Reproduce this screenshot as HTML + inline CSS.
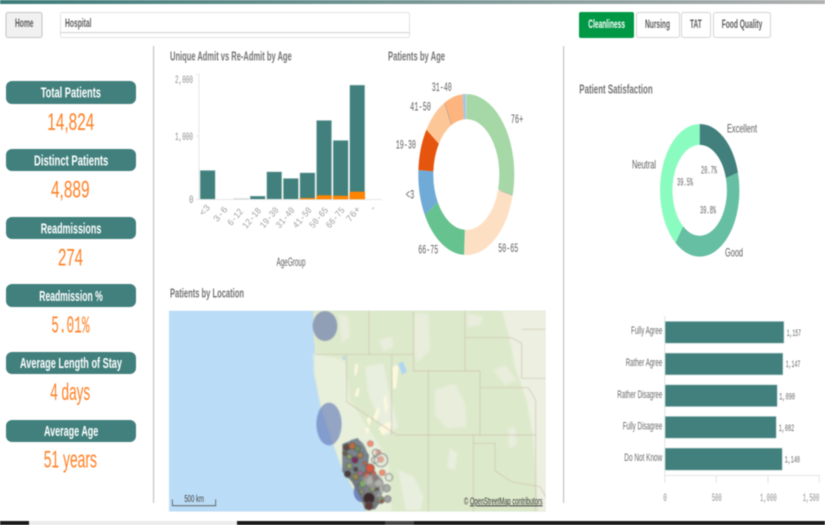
<!DOCTYPE html>
<html><head><meta charset="utf-8"><title>Hospital</title>
<style>
html,body{margin:0;padding:0;background:#fff;width:825px;height:525px;overflow:hidden}
svg{display:block;filter:blur(.4px)}
text{font-family:"Liberation Sans",sans-serif}
.t{font-weight:bold;font-size:13px;fill:#757575}
.k{font-weight:bold;font-size:15px;fill:#fff}
.v{font-size:24px;fill:#ff8125}
.m{font-family:"Liberation Mono",monospace;font-size:11px;fill:#8c8c8c}
.r{font-family:"Liberation Mono",monospace;font-size:9.5px;fill:#a0a0a0}
.d{font-family:"Liberation Mono",monospace;font-size:12.5px;fill:#5e5e5e}
.s{font-size:12px;fill:#5e5e5e}
.l{font-size:11px;fill:#6a6a6a}
.n{font-family:"Liberation Mono",monospace;font-size:10px;fill:#666}
.b{font-weight:bold;font-size:12px;fill:#5c5c5c}
</style></head><body>
<svg width="825" height="525" viewBox="0 0 825 525" xmlns="http://www.w3.org/2000/svg">
<defs>
<linearGradient id="g"><stop offset="0" stop-color="#3c7d7a"/><stop offset="1" stop-color="#b0b0b0"/></linearGradient>
<clipPath id="mc"><rect x="12" y="32" width="1130" height="603"/></clipPath>
<filter id="bl" x="-5%" y="-5%" width="110%" height="110%"><feGaussianBlur stdDeviation="3"/></filter>
<filter id="bs" x="-5%" y="-5%" width="110%" height="110%"><feGaussianBlur stdDeviation="1.3"/></filter>
</defs>
<rect width="825" height="525" fill="#fff"/>
<rect width="825" height="4" fill="url(#g)"/>

<!-- top controls -->
<rect x="6" y="12.5" width="36" height="25" rx="2" fill="#f1f1f1" stroke="#c4c4c4"/>
<text class="b" x="15" y="27" textLength="18.5" lengthAdjust="spacingAndGlyphs">Home</text>
<rect x="60.5" y="12.5" width="349" height="25" rx="2" fill="#fff" stroke="#e2e2e2"/>
<rect x="60" y="32" width="350" height="1.2" fill="#d6d6d6"/>
<text class="b" x="65" y="27" textLength="26.5" lengthAdjust="spacingAndGlyphs">Hospital</text>

<rect x="579" y="12" width="55" height="26" rx="2" fill="#009845"/>
<text class="b" x="588.3" y="28" textLength="36.7" lengthAdjust="spacingAndGlyphs" style="fill:#fff">Cleanliness</text>
<rect x="636.5" y="12.5" width="43" height="25" rx="2" fill="#fff" stroke="#d4d4d4"/>
<text class="b" x="645" y="28" textLength="25" lengthAdjust="spacingAndGlyphs">Nursing</text>
<rect x="681.5" y="12.5" width="29" height="25" rx="2" fill="#fff" stroke="#d4d4d4"/>
<text class="b" x="690" y="28" textLength="11.7" lengthAdjust="spacingAndGlyphs">TAT</text>
<rect x="713.5" y="12.5" width="57" height="25" rx="2" fill="#fff" stroke="#d4d4d4"/>
<text class="b" x="721.7" y="28" textLength="40.6" lengthAdjust="spacingAndGlyphs">Food Quality</text>

<!-- dividers -->
<rect x="153" y="46" width="1.2" height="457" fill="#c4c4c4"/>
<rect x="563" y="46" width="1.2" height="457" fill="#c4c4c4"/>

<!-- KPIs -->
<g fill="#41807d">
<rect x="6" y="81" width="130" height="23" rx="6"/>
<rect x="6" y="149" width="130" height="22" rx="6"/>
<rect x="6" y="217" width="130" height="22" rx="6"/>
<rect x="6" y="284" width="130" height="23" rx="6"/>
<rect x="6" y="352" width="130" height="22" rx="6"/>
<rect x="6" y="420" width="130" height="22" rx="6"/>
</g>
<text class="k" x="40.7" y="97.5" textLength="60.3" lengthAdjust="spacingAndGlyphs">Total Patients</text>
<text class="k" x="34" y="165.5" textLength="74.3" lengthAdjust="spacingAndGlyphs">Distinct Patients</text>
<text class="k" x="40.7" y="233.5" textLength="60.6" lengthAdjust="spacingAndGlyphs">Readmissions</text>
<text class="k" x="39.3" y="301" textLength="63.4" lengthAdjust="spacingAndGlyphs">Readmission %</text>
<text class="k" x="20" y="368" textLength="102" lengthAdjust="spacingAndGlyphs">Average Length of Stay</text>
<text class="k" x="44" y="436" textLength="54.3" lengthAdjust="spacingAndGlyphs">Average Age</text>

<text class="v" x="47.3" y="130" textLength="47" lengthAdjust="spacingAndGlyphs">14,824</text>
<text class="v" x="51" y="197.5" textLength="38.5" lengthAdjust="spacingAndGlyphs">4,889</text>
<text class="v" x="58" y="265.5" textLength="25" lengthAdjust="spacingAndGlyphs">274</text>
<text class="v" x="51.2" y="332.5" textLength="38.3" lengthAdjust="spacingAndGlyphs" style="font-family:'Liberation Mono',monospace">5.01%</text>
<text class="v" x="50.2" y="400" textLength="40" lengthAdjust="spacingAndGlyphs">4 days</text>
<text class="v" x="43.7" y="467.5" textLength="53.3" lengthAdjust="spacingAndGlyphs">51 years</text>

<!-- titles -->
<text class="t" x="170" y="60.5" textLength="121.7" lengthAdjust="spacingAndGlyphs">Unique Admit vs Re-Admit by Age</text>
<text class="t" x="388" y="60.5" textLength="57" lengthAdjust="spacingAndGlyphs">Patients by Age</text>
<text class="t" x="579.3" y="93.5" textLength="73.4" lengthAdjust="spacingAndGlyphs">Patient Satisfaction</text>
<text class="t" x="170" y="297.5" textLength="74" lengthAdjust="spacingAndGlyphs">Patients by Location</text>

<!-- bar chart -->
<g stroke="#e6e6e6" stroke-width="1"><path d="M199 74V199.5M196 74.5h3M196 136h3M196 199.5H382" fill="none"/></g>
<text class="m" x="175" y="83" textLength="18" lengthAdjust="spacingAndGlyphs">2,000</text>
<text class="m" x="175" y="140" textLength="18" lengthAdjust="spacingAndGlyphs">1,000</text>
<text class="m" x="189" y="203" textLength="4.5" lengthAdjust="spacingAndGlyphs">0</text>
<g fill="#41807d" stroke="#d4e4e2" stroke-width=".6">
<rect x="200" y="170.3" width="15.3" height="29"/>
<rect x="233.3" y="198.2" width="15.3" height="1.1" fill="#cfdcda" stroke="none"/>
<rect x="250" y="196" width="15.3" height="3.3"/>
<rect x="266.6" y="171.7" width="15.3" height="27.6"/>
<rect x="283.2" y="178.3" width="15.3" height="21"/>
<rect x="299.8" y="172.7" width="15.3" height="26.6"/>
<rect x="316.4" y="120.3" width="15.3" height="79"/>
<rect x="333" y="140.3" width="15.3" height="59"/>
<rect x="349.6" y="85" width="15.3" height="114.3"/>
</g>
<g fill="#ff8400">
<rect x="299.8" y="198" width="15.3" height="1.3"/>
<rect x="316.4" y="195.3" width="15.3" height="4"/>
<rect x="333" y="195.7" width="15.3" height="3.6"/>
<rect x="349.6" y="191.7" width="15.3" height="7.6"/>
</g>
<g text-anchor="middle">
<text class="r" transform="translate(207,212) rotate(-50)" text-anchor="middle">&lt;3</text>
<text class="r" transform="translate(222.7,216) rotate(-50)" text-anchor="middle">3-6</text>
<text class="r" transform="translate(237.5,219) rotate(-50)" textLength="19" lengthAdjust="spacingAndGlyphs" text-anchor="middle">6-12</text>
<text class="r" transform="translate(254,220) rotate(-50)" textLength="24" lengthAdjust="spacingAndGlyphs" text-anchor="middle">12-18</text>
<text class="r" transform="translate(271.5,219.5) rotate(-50)" textLength="24" lengthAdjust="spacingAndGlyphs" text-anchor="middle">19-30</text>
<text class="r" transform="translate(287.5,219.5) rotate(-50)" textLength="24" lengthAdjust="spacingAndGlyphs" text-anchor="middle">31-40</text>
<text class="r" transform="translate(304.5,219.5) rotate(-50)" textLength="24" lengthAdjust="spacingAndGlyphs" text-anchor="middle">41-50</text>
<text class="r" transform="translate(321,219.5) rotate(-50)" textLength="24" lengthAdjust="spacingAndGlyphs" text-anchor="middle">50-65</text>
<text class="r" transform="translate(337.5,219.5) rotate(-50)" textLength="24" lengthAdjust="spacingAndGlyphs" text-anchor="middle">66-75</text>
<text class="r" transform="translate(355.5,216) rotate(-50)" text-anchor="middle">76+</text>
<text class="r" transform="translate(375,210) rotate(-50)" text-anchor="middle">-</text>
</g>
<text class="s" x="276.5" y="266" textLength="29" lengthAdjust="spacingAndGlyphs">AgeGroup</text>

<!-- age donut -->
<g transform="translate(466.3,174.5) scale(1,1.677) rotate(-90)" fill="none" stroke-width="15">
<circle r="40.5" pathLength="100" stroke="#a5d8a6" stroke-dasharray="29.3 100" stroke-dashoffset="0"/>
<circle r="40.5" pathLength="100" stroke="#fde0c4" stroke-dasharray="21.5 100" stroke-dashoffset="-29.3"/>
<circle r="40.5" pathLength="100" stroke="#66c28e" stroke-dasharray="15.9 100" stroke-dashoffset="-50.8"/>
<circle r="40.5" pathLength="100" stroke="#6fabd6" stroke-dasharray="9.3 100" stroke-dashoffset="-66.7"/>
<circle r="40.5" pathLength="100" stroke="#e6550d" stroke-dasharray="8.5 100" stroke-dashoffset="-76"/>
<circle r="40.5" pathLength="100" stroke="#fdc696" stroke-dasharray="7.9 100" stroke-dashoffset="-84.5"/>
<circle r="40.5" pathLength="100" stroke="#fdb47e" stroke-dasharray="6.5 100" stroke-dashoffset="-92.4"/>
<circle r="40.5" pathLength="100" stroke="#a9c4de" stroke-dasharray="1.1 100" stroke-dashoffset="-98.9"/>
</g>
<path d="M499.5 190.5L512 195M445 103L451 124" stroke="#a0a0a0" stroke-width=".5" fill="none"/>
<text class="d" x="431.7" y="91" textLength="20" lengthAdjust="spacingAndGlyphs">31-40</text>
<text class="d" x="410" y="110.5" textLength="21" lengthAdjust="spacingAndGlyphs">41-50</text>
<text class="d" x="510.7" y="123" textLength="12.6" lengthAdjust="spacingAndGlyphs">76+</text>
<text class="d" x="395.7" y="148.5" textLength="20.3" lengthAdjust="spacingAndGlyphs">19-30</text>
<text class="d" x="405.7" y="198.5" textLength="8.6" lengthAdjust="spacingAndGlyphs">&lt;3</text>
<text class="d" x="418.3" y="253.5" textLength="20" lengthAdjust="spacingAndGlyphs">66-75</text>
<text class="d" x="498.3" y="252" textLength="20" lengthAdjust="spacingAndGlyphs">50-65</text>

<!-- satisfaction donut -->
<g transform="translate(699.7,190.3) scale(1,1.67) rotate(-90)" fill="none" stroke-width="12.5">
<circle r="33.45" pathLength="100" stroke="#41807d" stroke-dasharray="20.7 100" stroke-dashoffset="0"/>
<circle r="33.45" pathLength="100" stroke="#66bfa2" stroke-dasharray="39.8 100" stroke-dashoffset="-20.7"/>
<circle r="33.45" pathLength="100" stroke="#8bfcc0" stroke-dasharray="39.5 100" stroke-dashoffset="-60.5"/>
</g>
<text class="s" x="727" y="132.5" textLength="30" lengthAdjust="spacingAndGlyphs">Excellent</text>
<text class="s" x="632" y="168.5" textLength="24" lengthAdjust="spacingAndGlyphs">Neutral</text>
<text class="s" x="725" y="256.5" textLength="18" lengthAdjust="spacingAndGlyphs">Good</text>
<text class="d" x="701" y="173.5" textLength="16" lengthAdjust="spacingAndGlyphs" style="font-size:11px">20.7%</text>
<text class="d" x="677" y="185.5" textLength="16" lengthAdjust="spacingAndGlyphs" style="font-size:11px">39.5%</text>
<text class="d" x="700" y="213.5" textLength="16" lengthAdjust="spacingAndGlyphs" style="font-size:11px">39.8%</text>

<!-- horizontal bars -->
<path d="M664.7 316V475M664.5 475.5H819.6M664.7 475v8M716.3 475v8M768 475v8M819.3 475v8" stroke="#e4e4e4" fill="none"/>
<g fill="#41807d" stroke="#cfe2df" stroke-width=".7">
<rect x="665" y="321.3" width="119" height="22"/>
<rect x="665" y="353" width="118" height="22"/>
<rect x="665" y="384.7" width="112.3" height="22"/>
<rect x="665" y="416.3" width="111.3" height="22"/>
<rect x="665" y="448" width="117.3" height="22.3"/>
</g>
<text class="l" x="631" y="334" textLength="31.3" lengthAdjust="spacingAndGlyphs">Fully Agree</text>
<text class="l" x="625.7" y="366" textLength="36.6" lengthAdjust="spacingAndGlyphs">Rather Agree</text>
<text class="l" x="617.3" y="398" textLength="45" lengthAdjust="spacingAndGlyphs">Rather Disagree</text>
<text class="l" x="622.7" y="429.5" textLength="39.6" lengthAdjust="spacingAndGlyphs">Fully Disagree</text>
<text class="l" x="624.3" y="461" textLength="38" lengthAdjust="spacingAndGlyphs">Do Not Know</text>
<text class="n" x="786.7" y="336" textLength="14.3" lengthAdjust="spacingAndGlyphs">1,157</text>
<text class="n" x="785.7" y="367" textLength="14.6" lengthAdjust="spacingAndGlyphs">1,147</text>
<text class="n" x="779.3" y="399.5" textLength="15.7" lengthAdjust="spacingAndGlyphs">1,090</text>
<text class="n" x="778.7" y="431" textLength="15.6" lengthAdjust="spacingAndGlyphs">1,082</text>
<text class="n" x="784.7" y="462.5" textLength="15.3" lengthAdjust="spacingAndGlyphs">1,140</text>
<text class="m" x="663.3" y="501" textLength="3.6" lengthAdjust="spacingAndGlyphs">0</text>
<text class="m" x="711.7" y="501" textLength="10" lengthAdjust="spacingAndGlyphs">500</text>
<text class="m" x="760" y="501" textLength="16.7" lengthAdjust="spacingAndGlyphs">1,000</text>
<text class="m" x="802.7" y="501" textLength="16.6" lengthAdjust="spacingAndGlyphs">1,500</text>

<!-- map (coordinates at 3x) -->
<g transform="translate(165,300) scale(.33333)">
<g clip-path="url(#mc)">
<rect x="12" y="32" width="1130" height="603" fill="#bbdcf7"/>
<path d="M445 32L445 100 450 160 448 220 460 280 470 330 500 420 530 500 575 590 605 635H1142V32Z" fill="#dde9cb"/>
<g filter="url(#bl)">
<path d="M1010 32H1142V635H1120L1105 420 1085 300 1050 200 1030 100Z" fill="#edf0e0"/>
<path d="M445 160L540 180 555 300 620 400 670 480 680 635H610L530 500 470 330 448 220Z" fill="#e8f0dc"/>
<path d="M750 40l40 0 5 110-40 40-8-60ZM520 40l30 10 5 60-25 20ZM640 120l40-10 6 30-30 15Z" fill="#e8eddc"/>
<path d="M810 270l60-20 30 60 5 70-60 5-35-40ZM985 210l35-15 35 45-35 15ZM905 40l50 10-8 25-42 5ZM1030 385l20-5 6 55-25 10Z" fill="#e8eddc"/>
<path d="M700 510l45 20 30 60-8 40h-45ZM855 445l22 15-8 50-22-8ZM600 200l55-10 20 100 25 90-40 30-50-130Z" fill="#e9efdf"/>
</g>
<g filter="url(#bs)">
<path d="M570 195l9-5-2 28-9 12ZM682 205c5-12 18-12 18 0l-6 58-10 5ZM575 265l9 0-4 24-11 0ZM605 360l8-14 6 12-6 22ZM625 350l14-30 6 14-12 32ZM640 385l30-20 12 3-8 25-22 12ZM655 300l8-20 6 40-7 25ZM600 385l10-3 4 15-10 5Z" fill="#fcf8de"/>
<path d="M700 190l14-5 12 30-15 9Z" fill="#aed6f1"/>
<path d="M534 168h6v12h-6Z" fill="#aed6f1"/>
</g>
<g fill="none" stroke="#cbbfae" stroke-width="2" filter="url(#bs)">
<path d="M450 163H745M612 32V163M745 32V213H945M900 32V213M900 113H1040L1070 130V235H1142M1070 88H1142M545 163V305L695 405H1112M680 163V405M790 213V635M945 213V405M947 263H1090L1112 300V405M1112 405V635M925 405V635M925 430H990V512L1040 545 1125 560 1142 590"/>
</g>
<g filter="url(#bs)">
<ellipse cx="480" cy="78" rx="37" ry="45" fill="#6d7cab" fill-opacity=".68"/>
<ellipse cx="492" cy="372" rx="38" ry="64" fill="#5f74b5" fill-opacity=".62"/>
<ellipse cx="592" cy="575" rx="26" ry="32" fill="#5f74b5" fill-opacity=".85"/>
<path d="M532 432L578 414 612 465 608 505 640 540 650 600 630 628 600 628 585 590 560 545 532 515Z" fill="#697078" fill-opacity=".92"/>
<ellipse cx="570" cy="475" rx="38" ry="58" fill="#7c8791" fill-opacity=".8"/>
<ellipse cx="620" cy="560" rx="38" ry="42" fill="#8e8e8e" fill-opacity=".6"/>
<g stroke="#5c5c5c" stroke-opacity=".75" stroke-width="3">
<circle cx="545" cy="442" r="10" fill="#5c4a42"/><circle cx="562" cy="438" r="10" fill="#bf6a3e"/><circle cx="578" cy="446" r="9" fill="#6d8b5e"/>
<circle cx="540" cy="460" r="7" fill="#6a5a50"/><circle cx="553" cy="470" r="8" fill="#8ca06d"/><circle cx="570" cy="480" r="10" fill="#7c2f5e"/><circle cx="586" cy="466" r="9" fill="#a88250"/>
<circle cx="553" cy="498" r="9" fill="#90a56d"/><circle cx="548" cy="522" r="10" fill="#483c38"/><circle cx="572" cy="530" r="10" fill="#8f8a4f"/>
<circle cx="572" cy="508" r="7" fill="#4f4640"/><circle cx="594" cy="551" r="11" fill="#7dab66"/><circle cx="615" cy="505" r="13" fill="#d9593e"/>
<circle cx="605" cy="525" r="10" fill="#c25545"/><circle cx="630" cy="535" r="10" fill="#6e4d45"/><circle cx="612" cy="595" r="17" fill="#3e2a2d"/>
<circle cx="622" cy="567" r="8" fill="#8aa763"/><circle cx="648" cy="600" r="10" fill="#88a06a"/><circle cx="650" cy="603" r="5" fill="#b85a48"/>
<circle cx="612" cy="618" r="12" fill="#5d3a3a"/><circle cx="590" cy="575" r="7" fill="#85936e"/><circle cx="635" cy="565" r="6" fill="#5a4a44"/>
<circle cx="585" cy="520" r="7" fill="#b06a8a"/><circle cx="600" cy="490" r="6" fill="#c66a4c"/><circle cx="625" cy="520" r="7" fill="#cf6347"/>
</g>
<g stroke="#b48a80" stroke-width="2">
<circle cx="616" cy="431" r="9" fill="#ef8f75"/><circle cx="640" cy="458" r="8" fill="#ef9a7e"/><circle cx="647" cy="478" r="9" fill="#ec8a70"/>
<circle cx="652" cy="518" r="9" fill="#ee8f72"/>
</g>
<g stroke="#8a8a8a" stroke-width="3" fill="#dcdcd0" fill-opacity=".3">
<circle cx="630" cy="480" r="10"/><circle cx="648" cy="480" r="20"/><circle cx="632" cy="458" r="10"/><circle cx="672" cy="532" r="11"/>
<circle cx="665" cy="565" r="11" fill="#9a9a9a" fill-opacity=".8"/><circle cx="668" cy="597" r="10" fill="#9a9a9a" fill-opacity=".9"/><circle cx="625" cy="545" r="20"/>
<circle cx="610" cy="540" r="16"/><circle cx="642" cy="585" r="7"/><circle cx="640" cy="550" r="12"/>
</g>
</g>
</g>
<path d="M22 598V617H152V598" stroke="#555" stroke-width="2.4" fill="none"/>
<text x="58" y="606" textLength="59" lengthAdjust="spacingAndGlyphs" style="font-size:30px;fill:#444">500 km</text>
<text x="897" y="613" textLength="236" lengthAdjust="spacingAndGlyphs" style="font-size:29px;fill:#333">© <tspan text-decoration="underline">OpenStreetMap contributors</tspan></text>
</g>

<!-- bottom strip -->
<rect x="0" y="521" width="825" height="4" fill="#1a1a1a"/>
<rect x="29" y="521" width="208" height="4" fill="#ececec"/>
<rect x="385" y="521" width="29" height="4" fill="#454545"/>
</svg>
</body></html>
